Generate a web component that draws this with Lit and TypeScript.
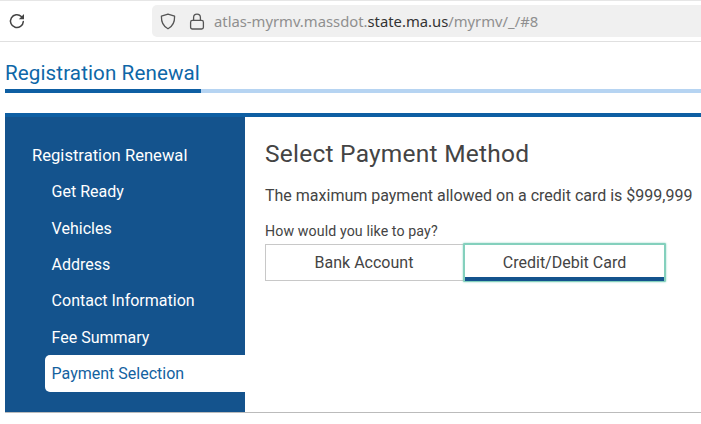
import { LitElement, html, css } from "lit";
import { customElement } from "lit/decorators.js";

@customElement("app-root")
export class AppRoot extends LitElement {
  static styles = css`
    :host { display: block; width: 701px; height: 424px; overflow: hidden; background: #fff; font-family: Roboto, sans-serif; color: #444; }
    .chrome { height: 42px; box-sizing: border-box; border-top: 1px solid #e6e6e6; border-bottom: 1px solid #e0e0e0; display: flex; align-items: flex-start; background: #fff; }
    .reload { width: 18px; height: 18px; margin: 11px 0 0 8px; color: #444; flex: none; }
    .url { margin: 4px 0 0 126px; flex: 1; height: 32px; background: #f0f0f0; border-radius: 5px 0 0 5px; display: flex; align-items: center; font: 14.8px "Noto Sans", sans-serif; color: #8f8f8f; white-space: nowrap; }
    .url svg { flex: none; color: #555; }
    .shield { margin-left: 8px; width: 16px; height: 17px; }
    .lock { margin-left: 13px; width: 16px; height: 17px; margin-right: 9px; }
    .url b { font-weight: 400; color: #333; }
    .tabs { margin: 19px 0 0 5px; }
    .tab-title { font-size: 20.6px; line-height: 24px; color: #0e67a8; letter-spacing: 0.1px; }
    .rule { display: flex; height: 4px; margin-top: 4px; background: #b6d4f2; }
    .rule i { width: 196px; background: #0e5fa3; }
    .panel { margin: 20px 0 0 5px; height: 300px; box-sizing: border-box; border-top: 4px solid #0e5fa3; border-bottom: 1px solid #bbb; display: flex; }
    .side { width: 240px; background: #14538d; color: #fff; box-sizing: border-box; padding: 20.8px 0 0 27px; font-size: 16px; }
    .side-title { line-height: 36.4px; font-size: 16.6px; }
    .side ul { list-style: none; margin: 0; padding: 0 0 0 13px; }
    .side li { height: 36.4px; line-height: 36.4px; padding-left: 6.6px; }
    .side li.on { background: #fff; color: #14629f; border-radius: 5px 0 0 5px; height: 37px; line-height: 37px; margin-top: -1px; }
    .main { padding: 21px 0 0 20px; flex: 1; min-width: 0; white-space: nowrap; }
    h1 { margin: 0; font-size: 24.5px; line-height: 32px; font-weight: 400; letter-spacing: 0.24px; color: #444; }
    .limit { margin-top: 16px; font-size: 16px; line-height: 20px; }
    .ask { margin-top: 16px; font-size: 14.2px; line-height: 18px; letter-spacing: 0.1px; }
    .choices { display: flex; margin-top: 3px; align-items: center; }
    .opt { box-sizing: border-box; display: flex; align-items: center; justify-content: center; font-size: 16px; color: #444; }
    .bank { width: 198px; height: 37px; border: 1px solid #c8c8c8; border-right: 0; padding-right: 1px; }
    .card { width: 203px; height: 39px; position: relative; border: 2px solid #84d0bd; border-radius: 1px; padding-bottom: 1px; box-shadow: 0 0 2px #84d0bd; }
    .card::after { content: ""; position: absolute; left: 0; right: 0; bottom: -1px; height: 4px; background: #14538d; }
  `;

  render() {
    const items = ["Get Ready", "Vehicles", "Address", "Contact Information", "Fee Summary"];
    return html`
      <div class="chrome">
        <svg class="reload" viewBox="0 0 18 18" fill="none" stroke="currentColor" stroke-width="1.5" stroke-linecap="round">
          <path d="M15.3 9.6a6.4 6.4 0 1 1-2-5.1l1.6 1.6" />
          <path d="M16 2v5.2h-5.2z" fill="currentColor" stroke="none" />
        </svg>
        <div class="url">
          <svg class="shield" viewBox="0 0 16 17" fill="none" stroke="currentColor" stroke-width="1.3" stroke-linejoin="round">
            <path d="M8 1.2 14.6 3.2c.2 5.8-1.8 10-6.6 12.6C3.2 13.2 1.2 9 1.4 3.2z" />
          </svg>
          <svg class="lock" viewBox="0 0 16 17" fill="none" stroke="currentColor" stroke-width="1.3">
            <rect x="1.6" y="7.4" width="12.8" height="8.6" rx="1.8" />
            <path d="M4.6 7.4V4.6a3.4 3.4 0 0 1 6.8 0v2.8" />
          </svg>
          <span>atlas-myrmv.massdot.<b>state.ma.us</b>/myrmv/_/#8</span>
        </div>
      </div>
      <div class="tabs">
        <div class="tab-title">Registration Renewal</div>
        <div class="rule"><i></i></div>
      </div>
      <div class="panel">
        <nav class="side">
          <div class="side-title">Registration Renewal</div>
          <ul>
            ${items.map((i) => html`<li>${i}</li>`)}
            <li class="on">Payment Selection</li>
          </ul>
        </nav>
        <section class="main">
          <h1>Select Payment Method</h1>
          <div class="limit">The maximum payment allowed on a credit card is $999,999</div>
          <div class="ask">How would you like to pay?</div>
          <div class="choices">
            <div class="opt bank">Bank Account</div>
            <div class="opt card">Credit/Debit Card</div>
          </div>
        </section>
      </div>
    `;
  }
}
